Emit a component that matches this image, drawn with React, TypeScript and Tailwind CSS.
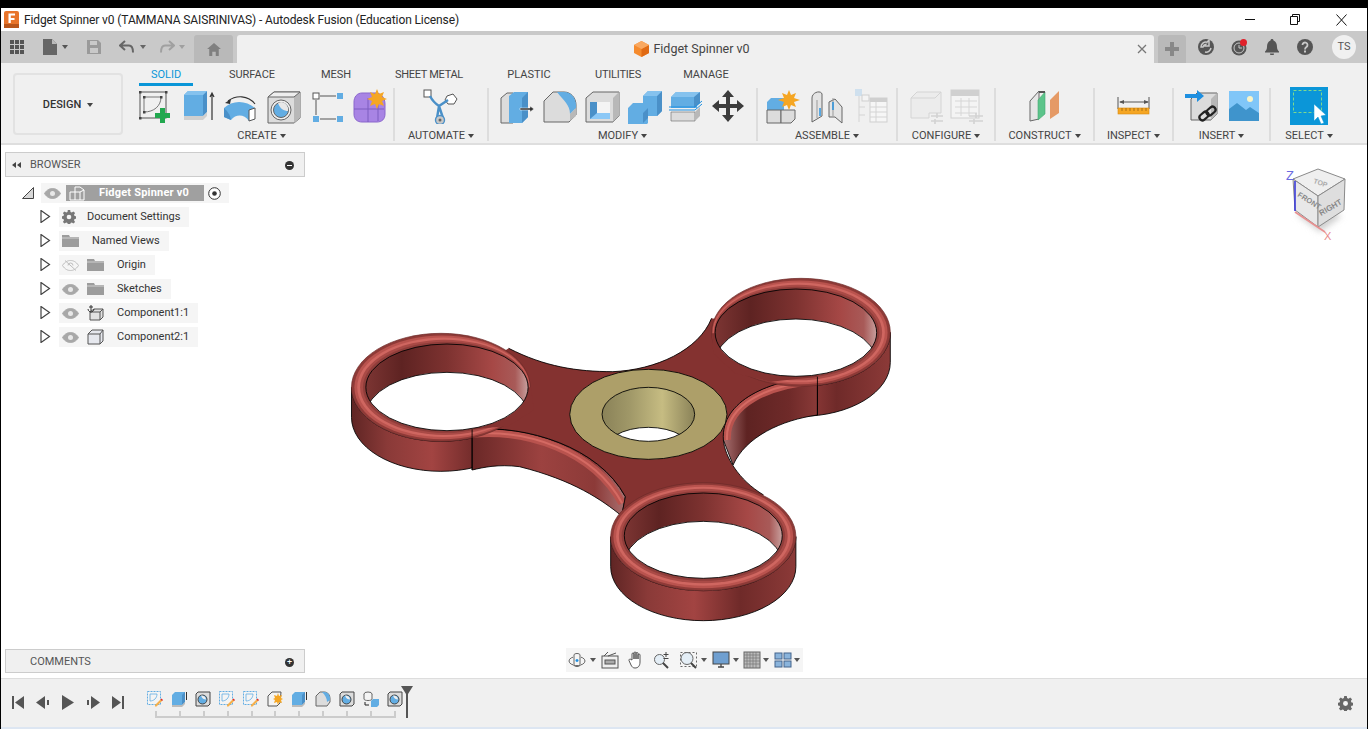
import type { ReactNode } from "react"

const BLUE = "#62ade3"
const BLUE_D = "#4a90c8"
const GRAY = "#dcdcdc"
const GRAY_D = "#b8b8b8"
const EDGE = "#666666"

const Ic = ({ children, w = 36, h = 36, className = "" }: { children: ReactNode; w?: number; h?: number; className?: string }) => (
  <svg width={w} height={h} viewBox={`0 0 ${w} ${h}`} className={`shrink-0 ${className}`}>{children}</svg>
)

const Caret = ({ className = "border-t-[#444444]" }: { className?: string }) => (
  <span className={`inline-block shrink-0 w-0 h-0 border-x-[3px] border-x-transparent border-t-[4px] ${className}`} />
)

// ribbon icons
const SketchIcon = () => (
  <Ic>
    <rect x="4" y="4" width="26" height="26" fill="none" stroke="#555" strokeWidth="1" />
    <path d="M8 9h17M8 9v15M25 9c0 9-7 15-17 15" fill="none" stroke="#777" strokeWidth="1" />
    {[[3, 3], [29, 3], [3, 29], [7, 8], [24, 8], [7, 23]].map(([x, y]) => <rect key={`${x}${y}`} x={x} y={y} width="2.5" height="2.5" fill="#444" />)}
    <path d="M24 20h5v5h5v5h-5v5h-5v-5h-5v-5h5z" fill="#22a84f" />
  </Ic>
)
const ExtrudeIcon = () => (
  <Ic>
    <path d="M5 28V7l4-4h19v21l-4 4z" fill={BLUE} />
    <path d="M24 28V7l4-4v21z" fill={BLUE_D} />
    <path d="M5 7h19l4-4H9z" fill="#85c2ee" />
    <path d="M5 28h19l4-4v4l-4 4H5z" fill="#cfcfcf" />
    <path d="M33 32V6M31 9l2-4 2 4" fill="none" stroke="#333" strokeWidth="1.2" />
  </Ic>
)
const RevolveIcon = () => (
  <Ic>
    <path d="M2 20c8-8 22-8 31 0v11l-6 2c-5-7-13-7-18-1l-7-3z" fill={BLUE} />
    <path d="M2 20c3 3 6 6 7 12l-7-3z" fill={BLUE_D} />
    <path d="M27 22l6-2v11l-6 2z" fill="#fff" stroke="#555" />
    <path d="M6 13c8-6 20-6 27 3" fill="none" stroke="#333" strokeWidth="1.1" />
    <path d="M3 15l6-4-1 5z" fill="#333" />
  </Ic>
)
const HoleIcon = () => (
  <Ic>
    <path d="M3 9l6-5h26v26l-6 5H3z" fill={GRAY} stroke={EDGE} />
    <path d="M29 35V9l6-5v26z" fill={GRAY_D} />
    <path d="M3 9h26l6-5H9z" fill="#eeeeee" stroke={EDGE} />
    <circle cx="16" cy="22" r="10" fill="#eeeeee" stroke={EDGE} />
    <circle cx="16" cy="22" r="7.5" fill={BLUE} stroke={EDGE} />
    <path d="M13 15c2 6 6 8 10 8 1-5-3-9-7-9z" fill="#e8e8e8" />
  </Ic>
)
const PatternIcon = () => (
  <Ic>
    <rect x="5" y="5" width="6" height="6" fill="#fff" stroke="#555" />
    <rect x="29" y="5" width="6" height="6" fill={BLUE} />
    <rect x="5" y="28" width="6" height="6" fill={BLUE} />
    <rect x="29" y="28" width="6" height="6" fill={BLUE} />
    <path d="M12 8h16M8 12v15M12 31h16" stroke="#555" fill="none" />
  </Ic>
)
const FormIcon = () => (
  <Ic>
    <path d="M3 14c0-5 3-9 8-9h14c5 0 9 5 9 11v10c0 5-3 8-8 8H11c-5 0-8-3-8-8z" fill="#a884e4" stroke="#8a66cc" />
    <path d="M3 21h30M17 10v24M27 10v23" stroke="#7d5cc0" fill="none" />
    <path d="M26 1l2 5 5-2-2 5 5 2-5 2 2 5-5-2-2 5-2-5-5 2 2-5-5-2 5-2-2-5 5 2z" fill="#f5a623" />
  </Ic>
)
const AutomateIcon = () => (
  <Ic>
    <rect x="1" y="2" width="7" height="7" fill="#fff" stroke="#555" />
    <path d="M24 8l6-2 4 5-3 5h-6l-3-4z" fill="#fff" stroke="#555" />
    <path d="M7 8c3 6 6 8 9 10l9-6M16 18l-2 12M16 18l4 12" fill="none" stroke={BLUE_D} strokeWidth="2.4" />
    <circle cx="17" cy="32" r="4.5" fill="#c8c8c8" stroke={BLUE_D} strokeWidth="1.4" />
    <circle cx="17" cy="32" r="1.5" fill="#666" />
  </Ic>
)
const PressPullIcon = () => (
  <Ic>
    <path d="M1 35V10l6-5h6v30z" fill={GRAY} stroke={EDGE} />
    <path d="M9 35V8l5-4h14v25l-6 6z" fill={BLUE} />
    <path d="M22 35V10l6-6v25z" fill={BLUE_D} />
    <path d="M20 20h10v-2l4 3-4 3v-2H20z" fill="#333" stroke="#fff" strokeWidth="0.5" />
  </Ic>
)
const FilletIcon = () => (
  <Ic>
    <path d="M2 13l9-9h11c7 0 12 6 12 13v10l-7 7H2z" fill={GRAY} stroke={EDGE} />
    <path d="M15 4h7c7 0 12 6 12 13v3l-6 6c0-9-6-13-13-22z" fill={BLUE} />
    <path d="M28 33V26l6-6v8z" fill={GRAY_D} />
  </Ic>
)
const ShellIcon = () => (
  <Ic>
    <path d="M2 10l7-6h26v24l-6 6H2z" fill={GRAY} stroke={EDGE} />
    <path d="M29 34V10l6-6v24z" fill={GRAY_D} />
    <path d="M6 14h20v17H6z" fill="#8cc8f6" />
    <path d="M6 14h7v11l-7 6z" fill={BLUE_D} />
    <path d="M13 14h13v11H13z" fill="#f4f4f4" />
  </Ic>
)
const CombineIcon = () => (
  <Ic>
    <path d="M2 20l5-5h10v-7l5-5h14v20l-5 5h-9v7l-5 5H2z" fill={BLUE} />
    <path d="M31 28V8l5-5v20zM17 35V25l5-5v10z" fill={BLUE_D} />
    <path d="M17 8l5-5h14l-5 5z" fill="#85c2ee" />
  </Ic>
)
const OffsetPlaneIcon = () => (
  <Ic>
    <path d="M3 9l5-5h24l-3 5v11H3z" fill={BLUE} />
    <path d="M3 9h24l5-5H8z" fill="#85c2ee" />
    <path d="M26 20V9l6-5v11z" fill={BLUE_D} />
    <path d="M1 19h26l7-6M1 22h26l7-6" fill="none" stroke="#1e8fe0" strokeWidth="1" />
    <path d="M3 24h24v9H3z" fill={GRAY} stroke={EDGE} strokeWidth="0.6" />
    <path d="M27 33v-9l5-5v9z" fill={GRAY_D} />
  </Ic>
)
const MoveIcon = () => (
  <Ic>
    <path d="M18 2l6 7h-4v7h7v-4l7 6-7 6v-4h-7v7h4l-6 7-6-7h4v-7H9v4l-7-6 7-6v4h7V9h-4z" fill="#3c3c3c" />
  </Ic>
)
const NewComponentIcon = () => (
  <Ic>
    <path d="M2 14l4-4h13v14H2z" fill={BLUE} />
    <path d="M2 22h14v13H2z" fill={GRAY} stroke={EDGE} />
    <path d="M16 22h14v9l-4 4H16z" fill={GRAY} stroke={EDGE} />
    <path d="M24 2l2 5 5-2-2 5 6 2-6 2 2 5-5-2-2 5-2-5-5 2 2-5-6-2 6-2-2-5 5 2z" fill="#f5a623" />
  </Ic>
)
const JointIcon = () => (
  <Ic>
    <path d="M3 34V10c0-6 9-8 10-4v22z" fill="#e4e4e4" stroke={EDGE} />
    <path d="M8 12v18" stroke="#999" />
    <path d="M20 14l6-3 7 8v16l-7-6h-6z" fill="#e4e4e4" stroke={EDGE} />
    <path d="M24 10v18" stroke="#999" />
    <path d="M11 20v8M24 14v8" stroke="#1e8fe0" strokeWidth="1.4" />
  </Ic>
)
const BomIcon = () => (
  <Ic>
    <rect x="2" y="1" width="7" height="7" fill="#cfe0ee" />
    <rect x="9" y="7" width="7" height="6" fill="#f4f4f4" stroke="#cfcfcf" />
    <path d="M6 8v26M6 19h6M6 27h6" stroke="#d4d4d4" fill="none" />
    <rect x="17" y="10" width="17" height="24" fill="#f6f6f6" stroke="#cfcfcf" />
    <rect x="17" y="10" width="17" height="4" fill="#cfcfcf" />
    <path d="M17 19h17M17 24h17M17 29h17M23 14v20" stroke="#d4d4d4" />
  </Ic>
)
const ParamBoxIcon = () => (
  <Ic>
    <path d="M4 10l6-6h24v21h-12v5H4z" fill="#ececec" stroke="#d4d4d4" />
    <path d="M4 10h24l6-6" fill="none" stroke="#d4d4d4" />
    <path d="M24 28h12M24 33h12M30 25v5M28 31v5" stroke="#d2d2d2" strokeWidth="1.6" />
  </Ic>
)
const ParamTableIcon = () => (
  <Ic>
    <rect x="2" y="2" width="28" height="28" fill="#f4f4f4" stroke="#d0d0d0" />
    <rect x="2" y="2" width="28" height="6" fill="#d0d0d0" />
    <path d="M6 13h22M6 19h22M6 25h22M12 10v18M20 10v18" stroke="#d6d6d6" />
    <path d="M20 28h14M20 33h14M27 25v5M25 31v5" stroke="#d2d2d2" strokeWidth="1.6" />
  </Ic>
)
const PlaneIcon = () => (
  <Ic>
    <path d="M3 13l9-10v28l-9 2z" fill="#e6e6e6" stroke={EDGE} />
    <path d="M11 32V12l7-8v22z" fill="#5cc48a" stroke="#48a872" strokeWidth="0.6" />
    <path d="M12 3h6v2h-6z" fill="#555" />
    <path d="M23 31V12l9-9v22z" fill="#e59a66" />
  </Ic>
)
const MeasureIcon = () => (
  <Ic>
    <path d="M2 9v12M33 9v12M4 14h28" stroke="#555" fill="none" />
    <path d="M3 14l5-2v4zM33 14l-5-2v4z" fill="#555" />
    <rect x="2" y="20" width="31" height="6" fill="#f5a623" stroke="#d98a10" strokeWidth="0.6" />
    <path d="M6 20v3M10 20v3M14 20v3M18 20v3M22 20v3M26 20v3M30 20v3" stroke="#8a5a10" strokeWidth="0.7" />
  </Ic>
)
const InsertDerive = () => (
  <Ic>
    <path d="M6 11l6-6h20v21l-6 6H6z" fill={GRAY} stroke={EDGE} />
    <path d="M26 32V11l6-6v21z" fill={GRAY_D} />
    <path d="M0 6h12V2l7 6-7 6v-4H0z" fill="#1e8fe0" />
    <g fill="none" stroke="#222" strokeWidth="2.2">
      <rect x="14" y="25" width="10" height="6" rx="3" transform="rotate(-40 19 28)" />
      <rect x="21" y="20" width="10" height="6" rx="3" transform="rotate(-40 26 23)" />
    </g>
  </Ic>
)
const ImageIcon = () => (
  <Ic w={30} h={30}>
    <rect width="30" height="30" fill="#80c6f8" />
    <path d="M0 30V18l8-6 9 7 4-3 9 6v8z" fill="#3f94cc" />
    <circle cx="21" cy="8" r="3" fill="#f8f4c8" />
  </Ic>
)
const SelectIcon = () => (
  <Ic w={38} h={38}>
    <rect width="38" height="38" fill="#0b96d8" />
    <rect x="3.5" y="3.500" width="28" height="22" fill="none" stroke="#7fd98c" strokeDasharray="3 2" />
    <path d="M24 17v17l4-4 3 7 3-1-3-7 5-1z" fill="#fff" stroke="#0b96d8" strokeWidth="0.5" />
  </Ic>
)

type Group = { label: string; w: number; gap?: number; icons: ReactNode[] }
const groups: Group[] = [
  { label: "CREATE", w: 265, gap: 7, icons: [<SketchIcon key="a" />, <ExtrudeIcon key="b" />, <RevolveIcon key="c" />, <HoleIcon key="d" />, <PatternIcon key="e" />, <FormIcon key="f" />] },
  { label: "AUTOMATE", w: 94, icons: [<AutomateIcon key="a" />] },
  { label: "MODIFY", w: 269, gap: 6, icons: [<PressPullIcon key="a" />, <FilletIcon key="b" />, <ShellIcon key="c" />, <CombineIcon key="d" />, <OffsetPlaneIcon key="e" />, <MoveIcon key="f" />] },
  { label: "ASSEMBLE", w: 140, gap: 8, icons: [<NewComponentIcon key="a" />, <JointIcon key="b" />, <BomIcon key="c" />] },
  { label: "CONFIGURE", w: 98, gap: 6, icons: [<ParamBoxIcon key="a" />, <ParamTableIcon key="b" />] },
  { label: "CONSTRUCT", w: 99, icons: [<PlaneIcon key="a" />] },
  { label: "INSPECT", w: 79, icons: [<MeasureIcon key="a" />] },
  { label: "INSERT", w: 97, gap: 8, icons: [<InsertDerive key="a" />, <ImageIcon key="b" />] },
  { label: "SELECT", w: 76, icons: [<SelectIcon key="a" />] },
]

const tabs = [
  { name: "SOLID", w: "w-[54px]" },
  { name: "SURFACE", w: "w-[118px]" },
  { name: "MESH", w: "w-[50px]" },
  { name: "SHEET METAL", w: "w-[136px] tracking-[-0.3px]" },
  { name: "PLASTIC", w: "w-[64px]" },
  { name: "UTILITIES", w: "w-[114px] tracking-[-0.2px]" },
  { name: "MANAGE", w: "w-[62px]" },
]

const TitleBar = () => (
  <div className="h-[23px] bg-white flex items-center pl-[3px] text-[12px] tracking-[-0.11px] text-[#222222]">
    <svg width="15" height="17" viewBox="0 0 15 17" className="shrink-0">
      <rect width="15" height="17" rx="2" fill="#e8742a" />
      <rect y="13" width="15" height="4" fill="#b8551a" />
      <path d="M4.500 2.500h6.500v2H6.800v2.500h3.700v2H6.800v3H4.500z" fill="#fff" />
    </svg>
    <span className="ml-[5px] pt-px">Fidget Spinner v0 (TAMMANA SAISRINIVAS) - Autodesk Fusion (Education License)</span>
    <div className="ml-auto flex items-center">
      <svg width="45" height="12" viewBox="0 0 45 12"><path d="M0 5.500h10" stroke="#111" /></svg>
      <svg width="46" height="12" viewBox="0 0 46 12"><path d="M0.500 2.500h7v8h-7zM2.500 2.500v-2h7v7h-2" fill="none" stroke="#111" /></svg>
      <svg width="31" height="12" viewBox="0 0 31 12"><path d="M0.500 0.500l10 11M10.500 0.500l-10 11" fill="none" stroke="#111" /></svg>
    </div>
  </div>
)

const TabRow = () => (
  <div className="h-[32px] bg-[#c9c9c9] flex items-end">
    <div className="w-[193px] h-full flex items-center pl-[9px]">
      <svg width="14" height="14" viewBox="0 0 14 14" className="shrink-0" fill="#555">
        {[0, 5, 10].flatMap((x) => [0, 5, 10].map((y) => <rect key={`${x}-${y}`} x={x} y={y} width="4" height="4" />))}
      </svg>
      <svg width="14" height="16" viewBox="0 0 14 16" className="ml-[19px] shrink-0"><path d="M0 0h9l5 5v11H0z" fill="#666" /><path d="M9 0l5 5H9z" fill="#bbb" /></svg>
      <span className="ml-[5px] flex"><Caret className="border-t-[#555555]" /></span>
      <svg width="14" height="14" viewBox="0 0 14 14" className="ml-[19px] shrink-0"><path d="M0 0h11l3 3v11H0z" fill="#9a9a9a" /><rect x="3" y="1" width="7" height="4" fill="#c9c9c9" /><rect x="3" y="8" width="8" height="5" fill="#c9c9c9" /></svg>
      <svg width="16" height="14" viewBox="0 0 16 14" className="ml-[18px] shrink-0"><path d="M6 1L1 5.500 6 10M1 5.500h9c3 0 4 3 4 7" fill="none" stroke="#666" strokeWidth="2" /></svg>
      <span className="ml-[5px] flex"><Caret className="border-t-[#666666]" /></span>
      <svg width="16" height="14" viewBox="0 0 16 14" className="ml-[13px] shrink-0"><path d="M10 1l5 4.500L10 10M15 5.500H6c-3 0-4 3-4 7" fill="none" stroke="#a0a0a0" strokeWidth="2" /></svg>
      <span className="ml-[4px] flex"><Caret className="border-t-[#a0a0a0]" /></span>
    </div>
    <div className="w-[39px] h-[28px] bg-[#b9b9b9] rounded-t-[3px] flex items-center justify-center">
      <svg width="14" height="13" viewBox="0 0 16 15"><path d="M8 0L0 7h2.500v8H6v-5h4v5h3.500V7H16z" fill="#808080" /></svg>
    </div>
    <div className="ml-[4px] w-[917px] h-[28px] bg-[#f0f0f0] rounded-t-[3px] flex items-center justify-between pl-[8px] pr-[7px]">
      <span className="w-[12px]" />
      <div className="flex items-center gap-[4px] text-[12.5px] tracking-normal text-[#444444] mr-[10px]">
        <svg width="15" height="16" viewBox="0 0 15 16"><path d="M7.500 0L15 4v8l-7.500 4L0 12V4z" fill="#f58b2e" /><path d="M7.500 8L15 4v8l-7.500 4z" fill="#e06a14" /><path d="M7.500 0L15 4 7.500 8 0 4z" fill="#f9a860" /></svg>
        <span>Fidget Spinner v0</span>
      </div>
      <svg width="10" height="10" viewBox="0 0 10 10"><path d="M1 1l8 8M9 1l-8 8" stroke="#777" strokeWidth="1.300" /></svg>
    </div>
    <div className="ml-[4px] w-[28px] h-[28px] bg-[#b9b9b9] rounded-t-[3px] flex items-center justify-center">
      <svg width="14" height="14" viewBox="0 0 14 14"><path d="M5 0h4v5h5v4H9v5H5V9H0V5h5z" fill="#888" /></svg>
    </div>
    <div className="flex-1 h-full flex items-center pl-[12px]">
      <svg width="16" height="16" viewBox="0 0 16 16" className="shrink-0"><circle cx="8" cy="8" r="8" fill="#555" /><path d="M3 8a5 5 0 0 1 6-4.800L11 1v6H6l1.500-1.500A3 3 0 0 0 5 8zM13 9a5 5 0 0 1-6 4" stroke="#c9c9c9" strokeWidth="1.500" fill="none" /></svg>
      <svg width="17" height="17" viewBox="0 0 17 17" className="ml-[17px] shrink-0"><circle cx="8" cy="9" r="7.500" fill="#555" /><circle cx="8" cy="9" r="5" fill="none" stroke="#c9c9c9" /><path d="M8 6v3h3" stroke="#c9c9c9" fill="none" /><circle cx="12.500" cy="3.500" r="3.500" fill="#e0202a" /></svg>
      <svg width="16" height="16" viewBox="0 0 16 16" className="ml-[16px] shrink-0"><path d="M8 0c1 0 1.500.7 1.500 1.500C12 2.500 13 5 13 8c0 2 1 3.500 2 4.500v1H1v-1c1-1 2-2.500 2-4.500 0-3 1-5.500 3.500-6.500C6.500.7 7 0 8 0zM6 14.500h4a2 2 0 0 1-4 0z" fill="#555" /></svg>
      <svg width="16" height="16" viewBox="0 0 16 16" className="ml-[17px] shrink-0"><circle cx="8" cy="8" r="8" fill="#555" /><path d="M5.500 6a2.500 2.500 0 1 1 4 2c-1 .7-1.500 1-1.500 2.500" fill="none" stroke="#c9c9c9" strokeWidth="1.800" /><rect x="7" y="11.500" width="2" height="2" fill="#c9c9c9" /></svg>
      <span className="ml-[19px] w-[24px] h-[24px] rounded-full bg-[#f0f0f0] flex items-center justify-center text-[11px] text-[#555555]">TS</span>
    </div>
  </div>
)

const Ribbon = () => (
  <div className="h-[82px] bg-[#f0f0f0] border-b-2 border-[#dedede] flex">
    <div className="w-[129px] shrink-0 pl-[12px] pt-[10px]">
      <div className="w-[110px] h-[62px] pt-[2px] border-2 border-[#e2e2e2] rounded-[4px] flex items-center justify-center gap-[6px] text-[11px] font-medium text-[#333333]">
        DESIGN <Caret />
      </div>
    </div>
    <div className="flex-1 flex flex-col">
      <div className="h-[25px] pl-[9px] flex">
        {tabs.map((t, i) => (
          <div
            key={t.name}
            className={i === 0
              ? `${t.w} h-[23px] pt-[4px] text-center whitespace-nowrap text-[11px] text-[#0a96d8] border-b-[3px] border-[#0a96d8]`
              : `${t.w} pt-[4px] text-center whitespace-nowrap text-[11px] text-[#444444]`}
          >
            {t.name}
          </div>
        ))}
      </div>
      <div className="flex">
        {groups.map((g, i) => (
          <div key={g.label} style={{ width: g.w }} className={i === groups.length - 1 ? "h-[53px] flex flex-col items-center" : "h-[53px] flex flex-col items-center border-r-2 border-[#dddddd]"}>
            <div style={{ gap: g.gap ?? 0 }} className="h-[36px] flex items-center">{g.icons}</div>
            <div className="mt-[4px] flex items-center gap-[3px] text-[11px] text-[#444444]">
              {g.label} <Caret />
            </div>
          </div>
        ))}
      </div>
    </div>
  </div>
)

const Eye = ({ off = false }: { off?: boolean }) => (
  <svg width="17" height="11" viewBox="0 0 17 11" className="shrink-0">
    <path d="M0.500 5.500C3 1.500 6 0.500 8.500 0.500s5.500 1 8 5c-2.500 4-5.500 5-8 5s-5.500-1-8-5z" fill={off ? "none" : "#a8a8a8"} stroke={off ? "#bdbdbd" : "#a8a8a8"} />
    {off ? <path d="M3 0.500l11 10M6 5.500a2.500 2.500 0 0 1 5 0" stroke="#bdbdbd" fill="none" /> : <circle cx="8.500" cy="5.500" r="2.500" fill="#e8e8e8" />}
  </svg>
)
const Arrow = () => (
  <svg width="11" height="13" viewBox="0 0 11 13" className="shrink-0 -mt-[2px]"><path d="M1 0.500l8.500 6L1 12.500z" fill="#fff" stroke="#444" strokeWidth="1.200" /></svg>
)
const Folder = () => (
  <svg width="17" height="12" viewBox="0 0 17 12" className="shrink-0"><path d="M0 0h7l1 2h9v10H0z" fill="#9c9c9c" /><path d="M0 3h17" stroke="#f5f5f5" strokeWidth="0.600" /></svg>
)
const Gear = ({ size = 14, color = "#777777" }: { size?: number; color?: string }) => (
  <svg width={size} height={size} viewBox="0 0 14 14" className="shrink-0">
    <path d="M5.800 0h2.400l.3 1.900 1.300.6 1.600-1.100 1.700 1.700-1.100 1.600.6 1.300 1.900.3v2.400l-1.900.3-.6 1.300 1.100 1.600-1.700 1.700-1.600-1.100-1.300.6-.3 1.900H5.800l-.3-1.900-1.300-.6-1.600 1.100L.9 11.900 2 10.300l-.6-1.300L-.5 8.700V6.300l1.900-.3.6-1.300L.9 3.100 2.600 1.400l1.600 1.100 1.300-.6z" fill={color} />
    <circle cx="7" cy="7" r="2.300" fill="#f5f5f5" />
  </svg>
)

const Row = ({ icons, label, pad }: { icons: ReactNode; label: string; pad: string }) => (
  <div className="h-[24px] flex items-center pl-[39px]">
    <Arrow />
    <div className="ml-[8px] h-[20px] bg-[#f5f5f5] flex items-center pl-[3px] pr-[9px] text-[11px] text-[#333333]">
      {icons}
      <span className={pad}>{label}</span>
    </div>
  </div>
)

const Browser = () => (
  <div>
    <div className="ml-[4px] w-[300px] h-[25px] pt-px bg-[#f0f0f0] border border-[#cccccc] flex items-center pl-[6px] pr-[10px] text-[11px] text-[#555555]">
      <svg width="9" height="6" viewBox="0 0 9 6" className="shrink-0"><path d="M4 0v6L0 3zM9 0v6L5 3z" fill="#444" /></svg>
      <span className="ml-[9px]">BROWSER</span>
      <span className="ml-auto w-[9px] h-[9px] rounded-full bg-[#333333] flex items-center justify-center"><span className="w-[5px] h-[1px] bg-white" /></span>
    </div>
    <div className="h-[4px]" />
    <div className="h-[24px] flex items-center pl-[21px]">
      <svg width="12" height="12" viewBox="0 0 12 12" className="shrink-0"><path d="M0.500 11.500L11.500 0.500v11z" fill="#d8d8d8" stroke="#444" /></svg>
      <div className="ml-[7px] w-[188px] h-[20px] bg-[#f5f5f5] flex items-center pl-[3px]">
        <Eye />
        <div className="ml-[5px] w-[138px] h-[16px] bg-[#a0a0a0] flex items-center pl-[3px]">
          <svg width="16" height="15" viewBox="0 0 16 15" className="shrink-0"><path d="M1 14V6h5V1h5l4 3v10z M6 6v8M6 6h5l4-2M11 6v8" fill="none" stroke="#fff" /></svg>
          <span className="ml-[14px] text-[11px] tracking-[0.2px] font-bold text-white whitespace-nowrap">Fidget Spinner v0</span>
        </div>
        <svg width="13" height="13" viewBox="0 0 13 13" className="ml-[4px] shrink-0"><circle cx="6.500" cy="6.500" r="5.800" fill="#fff" stroke="#333" /><circle cx="6.500" cy="6.500" r="2.300" fill="#333" /></svg>
      </div>
    </div>
    <Row label="Document Settings" pad="ml-[11px]" icons={<Gear />} />
    <Row label="Named Views" pad="ml-[13px]" icons={<Folder />} />
    <Row label="Origin" pad="ml-[13px]" icons={<><Eye off /><span className="ml-[8px]"><Folder /></span></>} />
    <Row label="Sketches" pad="ml-[13px]" icons={<><Eye /><span className="ml-[8px]"><Folder /></span></>} />
    <Row
      label="Component1:1"
      pad="ml-[13px]"
      icons={<><Eye /><svg width="17" height="16" viewBox="0 0 17 16" className="ml-[8px] shrink-0"><path d="M3 7l4-3h9v8l-3 3H3z" fill="#e2e2e2" stroke="#555" /><path d="M13 15V7l3-3M3 7h10" fill="none" stroke="#555" /><path d="M4 0v6M2 2h4M1 4c0 2 2 3 3 3s3-1 3-3" fill="none" stroke="#333" /></svg></>}
    />
    <Row
      label="Component2:1"
      pad="ml-[13px]"
      icons={<><Eye /><svg width="17" height="16" viewBox="0 0 17 16" className="ml-[8px] shrink-0"><path d="M1 5l4-4h11v11l-3 3H1z" fill="#e6e8ee" stroke="#555" /><path d="M13 15V5l3-4M1 5h12" fill="none" stroke="#555" /></svg></>}
    />
  </div>
)

const Rim = ({ o, i }: { o: number[]; i: number[] }) => {
  const stops = [0, 0.2, 0.4, 0.6, 0.8]
  const fills = ["#8e3a37", "#b9534e", "#cf6660", "#a94a46", "#8f3d3a"]
  return (
    <g>
      {stops.map((t, k) => (
        <ellipse
          key={t}
          cx={o[0] + (i[0] - o[0]) * t}
          cy={o[1] + (i[1] - o[1]) * t}
          rx={o[2] + (i[2] - o[2]) * t}
          ry={o[3] + (i[3] - o[3]) * t}
          fill={fills[k]}
          stroke={k === 0 ? "#6b2a28" : "none"}
          strokeWidth="2"
        />
      ))}
    </g>
  )
}

const Hole = ({ id, c, shift, wall }: { id: string; c: number[]; shift: number; wall: string }) => (
  <g>
    <clipPath id={id}><ellipse cx={c[0]} cy={c[1]} rx={c[2]} ry={c[3]} /></clipPath>
    <ellipse cx={c[0]} cy={c[1]} rx={c[2]} ry={c[3]} fill={`url(#${wall})`} />
    <ellipse cx={c[0]} cy={c[1] + shift} rx={c[2]} ry={c[3]} fill="#fff" stroke="#000" strokeWidth="2.500" clipPath={`url(#${id})`} />
    <ellipse cx={c[0]} cy={c[1]} rx={c[2]} ry={c[3]} fill="none" stroke="#000" strokeWidth="2.500" />
  </g>
)

const Spinner = () => {
  const lo = [281, 352, 249, 162]
  const li = [298, 352, 226, 130]
  const ro = [1284, 187, 249, 162]
  const ri = [1270, 188, 225, 131]
  const bo = [1012, 800, 258, 162]
  const bi = [1012, 797, 220, 128]
  return (
    <svg width="560" height="360" viewBox="0 0 1560 1080" preserveAspectRatio="none" className="absolute left-[339px] top-[125px]">
      <defs>
        <linearGradient id="wallO">
          <stop offset="0" stopColor="#5f2524" /><stop offset="0.2" stopColor="#8a3a38" /><stop offset="0.45" stopColor="#a24442" />
          <stop offset="0.7" stopColor="#6f2a29" /><stop offset="1" stopColor="#8c3a38" />
        </linearGradient>
        <linearGradient id="wallF">
          <stop offset="0" stopColor="#6a2827" /><stop offset="0.45" stopColor="#9c4240" /><stop offset="0.8" stopColor="#8c3a38" /><stop offset="1" stopColor="#a87070" />
        </linearGradient>
        <linearGradient id="wallR">
          <stop offset="0" stopColor="#a87070" /><stop offset="0.25" stopColor="#5e2322" /><stop offset="0.7" stopColor="#6f2a29" /><stop offset="1" stopColor="#8a3a38" />
        </linearGradient>
        <linearGradient id="wallI">
          <stop offset="0" stopColor="#7c3533" /><stop offset="0.22" stopColor="#5e2322" /><stop offset="0.5" stopColor="#7d3230" />
          <stop offset="0.78" stopColor="#a64846" /><stop offset="0.92" stopColor="#a85a58" /><stop offset="1" stopColor="#c8a09e" />
        </linearGradient>
        <linearGradient id="gold">
          <stop offset="0" stopColor="#8a8258" /><stop offset="0.3" stopColor="#a09868" /><stop offset="0.65" stopColor="#c6bc82" /><stop offset="1" stopColor="#8a8258" />
        </linearGradient>
      </defs>

      <path d="M32 352A249 162 0 0 0 530 352V442A249 162 0 0 1 32 442Z" fill="url(#wallO)" stroke="#000" strokeWidth="2.500" />
      <path d="M1533 187A249 162 0 0 1 1035 187V277A249 162 0 0 0 1533 277Z" fill="url(#wallO)" stroke="#000" strokeWidth="2.500" />
      <path d="M754 800A258 162 0 0 0 1270 800V890A258 162 0 0 1 754 890Z" fill="url(#wallO)" stroke="#000" strokeWidth="2.500" />
      <path d="M368 478C520 465 720 530 795 680L785 738C730 690 650 630 500 590C440 582 400 592 368 600Z" fill="url(#wallF)" stroke="#000" strokeWidth="2.500" />
      <path d="M1330 320C1200 330 1060 390 1068 510L1095 585C1130 500 1230 450 1330 435Z" fill="url(#wallR)" stroke="#000" strokeWidth="2.500" />

      <path d="M368 492C520 478 705 540 786 700" fill="none" stroke="#b9534e" strokeWidth="22" />
      <path d="M368 492C520 478 705 540 786 700" fill="none" stroke="#d46a63" strokeWidth="6" />
      <path d="M1330 333C1200 342 1072 400 1078 510" fill="none" stroke="#b9534e" strokeWidth="22" />
      <path d="M1330 333C1200 342 1072 400 1078 510" fill="none" stroke="#d46a63" strokeWidth="6" />

      <path
        d="M470 235C570 290 660 305 760 305C880 300 1000 240 1035 145L1270 188L1330 320C1200 330 1060 390 1068 510C1072 560 1110 630 1180 675L1012 797L785 735L795 680C720 530 520 465 370 478L298 352Z"
        fill="#843230"
      />
      <path d="M470 235C570 290 660 305 760 305C880 300 1000 240 1035 145" fill="none" stroke="#000" strokeWidth="2.500" />
      <path d="M370 478C520 465 720 530 795 680L785 735" fill="none" stroke="#000" strokeWidth="2.500" />
      <path d="M1330 320C1200 330 1060 390 1068 510C1072 560 1110 630 1180 675" fill="none" stroke="#000" strokeWidth="2.500" />

      <Rim o={lo} i={li} />
      <Rim o={ro} i={ri} />
      <Rim o={bo} i={bi} />
      {/* the rim stops where a ring runs into the plate */}
      <path d="M368 478L298 352L532 352L540 420L470 468Z" fill="#843230" />
      <path d="M1270 188L1036 190L1040 250L1100 310L1200 335L1330 320Z" fill="#843230" />

      <Hole id="hL" c={li} shift={85} wall="wallI" />
      <Hole id="hR" c={ri} shift={90} wall="wallI" />
      <Hole id="hB" c={bi} shift={85} wall="wallI" />

      <path d="M368 478V600M1330 320V435" stroke="#000" strokeWidth="2.500" />

      <ellipse cx="859" cy="433" rx="219" ry="135" fill="#ad9f69" stroke="#000" strokeWidth="2.500" />
      <Hole id="hC" c={[859, 433, 129, 81]} shift={120} wall="gold" />
    </svg>
  )
}

const ViewCube = () => (
  <svg width="72" height="82" viewBox="0 0 72 82" className="absolute left-[1279px] top-[15px]">
    <defs>
      <filter id="cubeShadow" x="-30%" y="-30%" width="160%" height="160%"><feGaussianBlur stdDeviation="3" /></filter>
    </defs>
    <path d="M16 54l24 18 22-16-20-8z" fill="#cfcfcf" filter="url(#cubeShadow)" />
    <path d="M13 19l25-10 27 10-27 17z" fill="#efefef" stroke="#8a8a8a" />
    <path d="M13 19l25 17v31L15 50z" fill="#e8e8e8" stroke="#8a8a8a" />
    <path d="M38 36l27-17-1 31-26 17z" fill="#dedede" stroke="#8a8a8a" />
    <path d="M15 21v30" stroke="#3a3ad8" strokeWidth="1.600" />
    <path d="M15 52l30 20" stroke="#e89090" strokeWidth="1.600" />
    <text x="33" y="23" fontSize="7" fill="#aaa" fontWeight="700" fontFamily="'Liberation Sans', sans-serif" transform="rotate(18 33 23)">TOP</text>
    <text x="17" y="36" fontSize="7.500" fill="#888" fontFamily="'Liberation Sans', sans-serif" fontWeight="700" transform="rotate(32 17 36)">FRONT</text>
    <text x="41" y="56" fontSize="8" fill="#888" fontFamily="'Liberation Sans', sans-serif" fontWeight="700" transform="rotate(-30 41 56)">RIGHT</text>
    <text x="6" y="20" fontSize="13" fill="#6a6ae0" fontFamily="'Liberation Sans', sans-serif">Z</text>
    <text x="44" y="80" fontSize="11" fill="#e88a8a" fontFamily="'Liberation Sans', sans-serif">X</text>
  </svg>
)

const NavBar = () => (
  <div className="absolute left-[565px] top-[503px] w-[237px] h-[24px] bg-[#f5f5f5] flex items-center pl-[2px]">
    <svg width="18" height="18" viewBox="0 0 18 18" className="shrink-0"><ellipse cx="9" cy="10" rx="8" ry="4.500" fill="none" stroke="#666" /><path d="M5 4h8v10H5z" fill="#f5f5f5" /><path d="M6 4c0-2 6-2 6 0v10c0 2-6 2-6 0z" fill="none" stroke="#666" /><path d="M7.500 9.500h3M9 8v3" stroke="#1e8fe0" strokeWidth="1.400" /></svg>
    <span className="ml-[4px] flex"><Caret className="border-t-[#555555]" /></span>
    <svg width="18" height="18" viewBox="0 0 18 18" className="shrink-0 ml-[5px]"><rect x="1" y="5" width="16" height="12" fill="#f0f0f0" stroke="#555" /><rect x="4" y="9" width="10" height="4" fill="#aaa" stroke="#555" /><path d="M3 5l4-4M7 5l8-3" stroke="#555" /></svg>
    <svg width="18" height="18" viewBox="0 0 18 18" className="shrink-0 ml-[8px]"><path d="M5 9V3a1 1 0 0 1 2 0v5V2a1 1 0 0 1 2 0v6V2.500a1 1 0 0 1 2 0V8 4a1 1 0 0 1 2 0v7c0 4-2 6-5 6-2 0-3-1-4-3L2 9.500c-.5-1 1-2 2-1z" fill="#fff" stroke="#444" strokeWidth="0.900" /></svg>
    <svg width="18" height="18" viewBox="0 0 18 18" className="shrink-0 ml-[8px]"><circle cx="6.500" cy="8.500" r="5" fill="#e4eef6" stroke="#666" /><path d="M10 12l5 5" stroke="#444" strokeWidth="2" /><path d="M13 1v5M10.500 3.500h5M10.500 7.500h5" stroke="#444" /></svg>
    <svg width="20" height="18" viewBox="0 0 20 18" className="shrink-0 ml-[8px]"><rect x="1.500" y="1.500" width="16" height="14" fill="none" stroke="#666" strokeDasharray="2 2" /><circle cx="8" cy="7.500" r="6" fill="#e4eef6" stroke="#666" /><path d="M12 12l5 5" stroke="#444" strokeWidth="2" /></svg>
    <span className="ml-[2px] flex"><Caret className="border-t-[#555555]" /></span>
    <svg width="18" height="18" viewBox="0 0 18 18" className="shrink-0 ml-[5px]"><rect x="1" y="1" width="16" height="12" fill="#6f9fd0" stroke="#444" /><path d="M6 16h6M9 13v3" stroke="#444" strokeWidth="1.300" /></svg>
    <span className="ml-[3px] flex"><Caret className="border-t-[#555555]" /></span>
    <svg width="18" height="18" viewBox="0 0 18 18" className="shrink-0 ml-[4px]"><rect x="1" y="1" width="16" height="16" fill="#bbb" stroke="#666" /><path d="M4 1v16M7 1v16M10 1v16M13 1v16M1 4h16M1 7h16M1 10h16M1 13h16" stroke="#777" strokeWidth="0.700" /></svg>
    <span className="ml-[2px] flex"><Caret className="border-t-[#555555]" /></span>
    <svg width="18" height="18" viewBox="0 0 18 18" className="shrink-0 ml-[5px]"><rect x="1" y="2" width="7" height="6" fill="#8ab4dc" stroke="#44648c" /><rect x="10" y="2" width="7" height="6" fill="#8ab4dc" stroke="#44648c" /><rect x="1" y="10" width="7" height="6" fill="#8ab4dc" stroke="#44648c" /><rect x="10" y="10" width="7" height="6" fill="#8ab4dc" stroke="#44648c" /></svg>
    <span className="ml-[2px] flex"><Caret className="border-t-[#555555]" /></span>
  </div>
)

const Mini = ({ kind }: { kind: string }) => (
  <svg width="16" height="16" viewBox="0 0 16 16">
    {kind === "sketch" && (
      <>
        <rect x="0.500" y="0.500" width="13" height="13" fill="#f4f4f4" stroke="#62ade3" strokeDasharray="2 1" />
        <path d="M3 3h7M3 3v7M10 3c0 4-3 7-7 7" fill="none" stroke="#62ade3" strokeWidth="0.800" />
        <path d="M8 14l6-6 1.500 1.500-6 6H8z" fill="#f5b04c" />
        <path d="M13.500 8.500l1-1 1.500 1.500-1 1z" fill="#e0282a" />
      </>
    )}
    {kind === "extrude" && (
      <>
        <path d="M1 4l3-3h10v10l-3 3H1z" fill={BLUE} />
        <path d="M11 14V4l3-3v10z" fill={BLUE_D} />
        <path d="M1 14h10l3-3v2l-3 3H1z" fill="#bbb" />
        <path d="M15.500 1v8" stroke="#333" />
      </>
    )}
    {kind === "hole" && (
      <>
        <path d="M1 3l2-2h12v12l-2 2H1z" fill={GRAY} stroke="#444" />
        <circle cx="7.500" cy="8.500" r="4.500" fill={BLUE} stroke="#444" />
        <path d="M6 4.500c1 3 3 4 5 4 0-2-2-4.500-5-4z" fill="#eee" />
      </>
    )}
    {kind === "comp" && (
      <>
        <path d="M1 5l4-4h9l-1 11-3 3H1z" fill="#f4f4f4" stroke="#555" />
        <path d="M11 2l1 3 3-1-1 3 2 1-2 1 1 3-3-1-1 3-1-3-3 1 1-3-2-1 2-1-1-3 3 1z" fill="#f5a623" />
      </>
    )}
    {kind === "fillet" && (
      <>
        <path d="M1 5l4-4h4c4 0 6 3 6 7v3l-3 4H1z" fill={GRAY} stroke="#666" />
        <path d="M7 1h2c4 0 6 3 6 7v1l-3 2c0-4-2-7-5-10z" fill={BLUE} />
      </>
    )}
    {kind === "joint" && (
      <>
        <ellipse cx="5" cy="3" rx="4" ry="2" fill="#f4f4f4" stroke="#666" />
        <path d="M1 3v5c0 2 8 2 8 0V3" fill="#f4f4f4" stroke="#666" />
        <path d="M2 11v3h4" fill="none" stroke="#222" />
        <path d="M8 10l2-2h6v6l-2 2H8z" fill={BLUE} />
      </>
    )}
  </svg>
)

const steps = ["sketch", "extrude", "hole", "sketch", "sketch", "comp", "extrude", "fillet", "hole", "joint", "hole"]

const Timeline = () => (
  <div className="h-[51px] bg-[#f0f0f0] border-t border-[#dddddd] border-b-2 border-b-[#dde6f2] flex items-center pl-[11px] pr-[14px]">
    <div className="flex items-center gap-[12px] -mt-[2px]">
      <svg width="12" height="13" viewBox="0 0 12 13"><path d="M0 0h2v13H0zM12 0v13L3 6.500z" fill="#555" /></svg>
      <svg width="14" height="13" viewBox="0 0 14 13"><path d="M9 0v13L0 6.500zM11 4h2v5h-2z" fill="#555" /></svg>
      <svg width="12" height="15" viewBox="0 0 12 15"><path d="M0 0l12 7.500L0 15z" fill="#555" /></svg>
      <svg width="14" height="13" viewBox="0 0 14 13"><path d="M5 0v13l9-6.500zM1 4h2v5H1z" fill="#555" /></svg>
      <svg width="12" height="13" viewBox="0 0 12 13"><path d="M0 0v13l9-6.500zM10 0h2v13h-2z" fill="#555" /></svg>
    </div>
    <div className="ml-[23px] flex flex-col mt-[3px]">
      <div className="flex gap-[8px]">
        {steps.map((s, i) => <Mini key={i} kind={s} />)}
      </div>
      <div className="mt-[4px] ml-[8px] w-[241px] h-[7px] border-b-2 border-[#cccccc] flex justify-between">
        {steps.map((_, i) => <span key={i} className="w-[2px] h-full bg-[#cccccc]" />)}
      </div>
    </div>
    <svg width="12" height="32" viewBox="0 0 12 32" className="-ml-[2px] -mt-[2px] shrink-0"><path d="M0 0h12L7 8v24H5V8z" fill="#555" /></svg>
    <span className="ml-auto"><Gear size={15} color="#666666" /></span>
  </div>
)

export default function App() {
  return (
    <div className="w-[1368px] h-[729px] overflow-hidden flex flex-col bg-white border-x border-black font-['Roboto',sans-serif]">
      <div className="h-[8px] shrink-0 bg-black -mx-px" />
      <TitleBar />
      <TabRow />
      <Ribbon />
      <div className="relative flex-1 flex flex-col justify-between pt-[7px] pb-[5px]">
        <Browser />
        <div className="ml-[4px] w-[300px] h-[24px] pt-[2px] bg-[#f0f0f0] border border-[#cccccc] flex items-center pl-[24px] pr-[10px] text-[11px] text-[#555555]">
          COMMENTS
          <span className="ml-auto w-[9px] h-[9px] rounded-full bg-[#333333] flex items-center justify-center text-[9px] leading-none text-white">+</span>
        </div>
        <Spinner />
        <ViewCube />
        <NavBar />
      </div>
      <Timeline />
    </div>
  )
}
